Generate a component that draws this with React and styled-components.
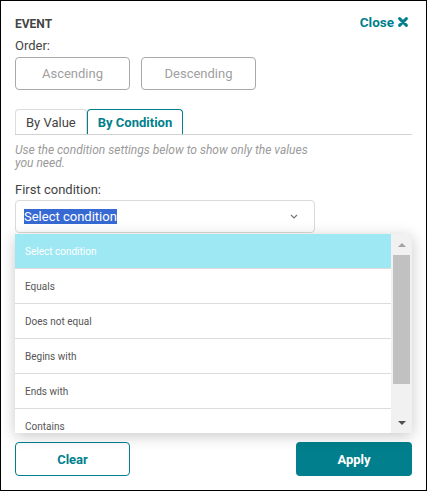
import React from "react";
import styled, { createGlobalStyle } from "styled-components";

const teal = "#017f8c";

const GlobalStyle = createGlobalStyle`
  html, body {
    margin: 0;
    padding: 0;
    background: #fff;
  }
  body {
    font-family: Roboto, "Liberation Sans", Arial, sans-serif;
  }
  * {
    box-sizing: border-box;
  }
`;

const Panel = styled.div`
  width: 427px;
  height: 491px;
  border: 1px solid #000;
  padding: 13px 14px 14px;
  display: flex;
  flex-direction: column;
  background: #fff;
`;

const Header = styled.div`
  height: 24px;
  display: flex;
  justify-content: space-between;
  align-items: flex-start;
`;

const Title = styled.div`
  margin-top: 3px;
  font-size: 12px;
  line-height: 14px;
  font-weight: 700;
  color: #444;
`;

const CloseLink = styled.a`
  display: flex;
  align-items: center;
  gap: 4px;
  margin-right: 4px;
  font-size: 13.5px;
  line-height: 16px;
  font-weight: 700;
  color: ${teal};
  cursor: pointer;
`;

const Label = styled.div`
  font-size: 13px;
  line-height: 15px;
  color: #444;
  margin-top: ${(p) => p.$mt || 0}px;
`;

const OrderRow = styled.div`
  display: flex;
  gap: 11px;
  margin-top: 4px;
`;

const OutlineButton = styled.button`
  width: ${(p) => p.$w || 115}px;
  height: ${(p) => p.$h || 33}px;
  border-radius: 4px;
  background: #fff;
  font-family: inherit;
  font-size: 13px;
  padding: 0;
  border: 1px solid ${(p) => (p.$accent ? teal : "#a9a9a9")};
  color: ${(p) => (p.$accent ? teal : "#a0a0a0")};
  font-weight: ${(p) => (p.$accent ? 700 : 400)};
`;

const SolidButton = styled.button`
  width: 116px;
  height: 34px;
  border: none;
  border-radius: 4px;
  background: ${teal};
  color: #fff;
  font-family: inherit;
  font-size: 13px;
  font-weight: 700;
`;

const TabBar = styled.div`
  display: flex;
  margin-top: 19px;
  border-bottom: 1px solid #d2d2d2;
`;

const Tab = styled.div`
  height: 25px;
  padding: 0 10px;
  display: flex;
  align-items: center;
  font-size: 13px;
  border: 1px solid ${(p) => (p.$active ? teal : "#dcdcdc")};
  border-bottom: none;
  border-radius: 4px 4px 0 0;
  color: ${(p) => (p.$active ? teal : "#444")};
  font-weight: ${(p) => (p.$active ? 700 : 400)};
`;

const Hint = styled.p`
  margin: 9px 0 0;
  width: 310px;
  font-size: 12px;
  line-height: 13px;
  font-style: italic;
  color: #9a9a9a;
`;

const SelectWrap = styled.div`
  position: relative;
  margin-top: 3px;
`;

const SelectBox = styled.div`
  width: 300px;
  height: 33px;
  border: 1px solid #dadada;
  border-radius: 4px;
  padding: 0 16px 0 8px;
  display: flex;
  align-items: center;
  justify-content: space-between;
`;

const Selected = styled.span`
  font-size: 13px;
  line-height: 15px;
  background: #3769d3;
  color: #fff;
`;

const Dropdown = styled.div`
  position: absolute;
  top: calc(100% + 1px);
  left: 0;
  width: 397px;
  height: 199px;
  display: flex;
  background: #fff;
  box-shadow: 0 3px 14px rgba(0, 0, 0, 0.22);
  z-index: 5;
`;

const List = styled.div`
  flex: 1;
  overflow: hidden;
`;

const Option = styled.div`
  height: 35px;
  padding-left: 10px;
  display: flex;
  align-items: center;
  font-size: 10px;
  border-bottom: 1px solid #dcdcdc;
  background: ${(p) => (p.$active ? "#9ee8f4" : "#fff")};
  color: ${(p) => (p.$active ? "#fff" : "#555")};
`;

const Scrollbar = styled.div`
  width: 21px;
  background: #f1f1f1;
  display: flex;
  flex-direction: column;
`;

const ArrowCell = styled.div`
  height: 21px;
  display: flex;
  align-items: center;
  justify-content: center;
`;

const Triangle = styled.div`
  width: 0;
  height: 0;
  border-left: 4px solid transparent;
  border-right: 4px solid transparent;
  ${(p) =>
    p.$up
      ? "border-bottom: 4px solid #a3a3a3;"
      : "border-top: 4px solid #505050;"}
`;

const Track = styled.div`
  flex: 1;
  padding: 0 2px;
`;

const Thumb = styled.div`
  height: 129px;
  background: #c1c1c1;
`;

const Footer = styled.div`
  margin-top: auto;
  display: flex;
  justify-content: space-between;
`;

const options = [
  "Select condition",
  "Equals",
  "Does not equal",
  "Begins with",
  "Ends with",
  "Contains",
];

function CloseIcon() {
  return (
    <svg width="10" height="10" viewBox="0 0 10 10">
      <path
        d="M1.6 1.6L8.4 8.4M8.4 1.6L1.6 8.4"
        stroke={teal}
        strokeWidth="2.9"
        strokeLinecap="round"
      />
    </svg>
  );
}

export default function App() {
  return (
    <>
      <GlobalStyle />
      <Panel>
        <Header>
          <Title>EVENT</Title>
          <CloseLink>
            Close <CloseIcon />
          </CloseLink>
        </Header>
        <Label>Order:</Label>
        <OrderRow>
          <OutlineButton>Ascending</OutlineButton>
          <OutlineButton>Descending</OutlineButton>
        </OrderRow>
        <TabBar>
          <Tab>By Value</Tab>
          <Tab $active>By Condition</Tab>
        </TabBar>
        <Hint>
          Use the condition settings below to show only the values you need.
        </Hint>
        <Label $mt={12}>First condition:</Label>
        <SelectWrap>
          <SelectBox>
            <Selected>Select condition</Selected>
            <svg width="8" height="5" viewBox="0 0 8 5">
              <path d="M1 1l3 3 3-3" fill="none" stroke="#777" strokeWidth="1.2" />
            </svg>
          </SelectBox>
          <Dropdown>
            <List>
              {options.map((o, i) => (
                <Option key={o} $active={i === 0}>
                  {o}
                </Option>
              ))}
            </List>
            <Scrollbar>
              <ArrowCell>
                <Triangle $up />
              </ArrowCell>
              <Track>
                <Thumb />
              </Track>
              <ArrowCell>
                <Triangle />
              </ArrowCell>
            </Scrollbar>
          </Dropdown>
        </SelectWrap>
        <Footer>
          <OutlineButton $accent $h={34}>
            Clear
          </OutlineButton>
          <SolidButton>Apply</SolidButton>
        </Footer>
      </Panel>
    </>
  );
}
